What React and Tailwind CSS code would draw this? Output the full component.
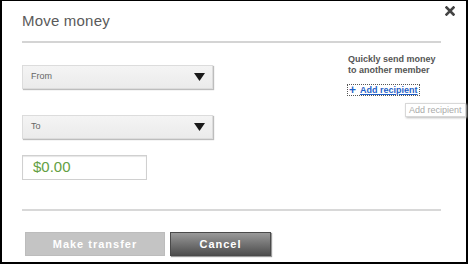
import React from "react";

const Caret = () => (
  <svg width="11" height="8" viewBox="0 0 11 8" className="block">
    <path d="M0 0 L11 0 L5.5 8 Z" fill="#1a1a1a" />
  </svg>
);

const SelectBox = ({ label }) => (
  <div className="w-[191px] h-[24px] flex items-center justify-between pl-[8px] pr-[7px] bg-gradient-to-b from-[#f4f4f4] to-[#ebebeb] border border-[#dcdcdc] shadow-[1px_1px_1px_#bdbdbd]">
    <span className="text-[9px] text-[#666]">{label}</span>
    <Caret />
  </div>
);

const App = () => {
  return (
    <div
      className="w-[470px] h-[265px] bg-white"
      style={{ fontFamily: '"Liberation Sans", Arial, sans-serif' }}
    >
      <div className="relative w-[468px] h-[264px] border-l-2 border-t border-r-2 border-b-2 border-black pl-[20px] pr-[24px] flex flex-col">
        {/* ---------------- header ---------------- */}
        <div className="flex items-start justify-between h-[40px]">
          <h1 className="mt-[9px] text-[15px] text-[#5a5a5a] tracking-[0.2px]">Move money</h1>
          <svg width="10" height="10" viewBox="0 0 10 10" className="mt-[5px] -mr-[13px]">
            <path d="M1.5 1.5 L8.5 8.5 M8.5 1.5 L1.5 8.5" stroke="#444" strokeWidth="2.6" strokeLinecap="square" />
          </svg>
        </div>
        <div className="h-[2px] w-[419px] bg-[#d4d4d4]" />

        {/* ---------------- body ---------------- */}
        <div className="flex h-[166px]">
          <div className="flex flex-col w-[326px]">
            <div className="mt-[22px]">
              <SelectBox label="From" />
            </div>
            <div className="mt-[26px]">
              <SelectBox label="To" />
            </div>
            <div className="mt-[16px] w-[125px] h-[25px] border border-[#d0d0d0] shadow-[inset_0_1px_1px_#e6e6e6] flex items-center pl-[10px]">
              <span className="text-[15px] text-[#63a043]">$0.00</span>
            </div>
          </div>

          <div className="relative flex flex-col pt-[11px]">
            <p className="text-[9px] font-bold text-[#555] leading-[11px]">
              Quickly send money
              <br />
              to another member
            </p>
            <a
              href="#"
              className="mt-[8px] self-start -ml-[1px] px-[1px] border border-dotted border-[#555] text-[9px] font-bold text-[#1f5fc8] leading-[10px] flex items-center gap-[4px]"
            >
              <span className="text-[12px] leading-[10px]">+</span>
              <span className="underline">Add recipient</span>
            </a>
            <div className="absolute left-[57px] top-[60px] h-[14px] px-[3px] bg-white border border-[#d8d8d8] shadow-[1px_1px_2px_#bbb] text-[9px] text-[#aaa] leading-[12px] whitespace-nowrap">
              Add recipient
            </div>
          </div>
        </div>

        <div className="h-[2px] w-[419px] bg-[#d8d8d8]" />

        {/* ---------------- footer ---------------- */}
        <div className="flex gap-[5px] mt-[21px] ml-[3px]">
          <button className="w-[140px] h-[24px] bg-[#c4c4c4] border border-[#bcbcbc] text-white text-[11px] font-bold tracking-[1px]">
            Make transfer
          </button>
          <button className="w-[101px] h-[24px] bg-gradient-to-b from-[#9a9a9a] to-[#4e4e4e] border border-[#4a4a4a] shadow-[1px_1px_1px_#999] text-white text-[11px] font-bold tracking-[1px]">
            Cancel
          </button>
        </div>
      </div>
    </div>
  );
};

export default App;
